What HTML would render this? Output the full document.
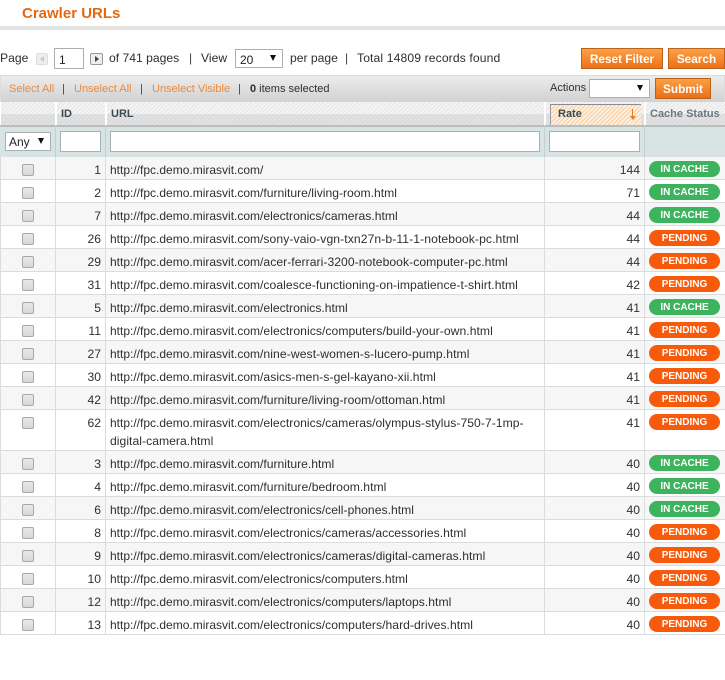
<!DOCTYPE html>
<html><head><meta charset="utf-8">
<style>
html,body{margin:0;padding:0;background:#fff;width:725px;height:680px;overflow:hidden}
body{font-family:"Liberation Sans",sans-serif;font-size:12.15px;color:#2f2f2f;position:relative}
.a{position:absolute;white-space:nowrap}
.btn{position:absolute;height:19px;line-height:20px;text-align:center;color:#fff;font-weight:bold;font-size:11.8px;background:linear-gradient(#fb9c3c,#f0690a);border:1px solid #b85a10;opacity:.95}
.inp{position:absolute;background:#fff;border:1px solid #aab0b0;box-sizing:border-box}
.tri{position:absolute;width:0;height:0;border-left:3px solid transparent;border-right:3px solid transparent;border-top:6px solid #111}
.t{font-size:11px}
.o{color:#ea8a3c}
.sep{color:#444}
.hd{position:absolute;top:102px;height:23px;background:repeating-linear-gradient(135deg,#e6e6e6 0 1px,#f4f4f4 1px 3px);overflow:hidden}
.hd:after{content:"";position:absolute;left:0;right:0;top:12px;bottom:0;background:rgba(180,180,180,.28)}
.ht{position:absolute;top:102px;line-height:25px;font-size:11px;font-weight:bold;color:#3a4b55;z-index:2}
.f{position:absolute;top:127px;height:30px;background:#d8e4e3}
.r{position:absolute;left:0;width:725px;height:22px;border-bottom:1px solid #d9dddd}
.r.odd{background:#f6f6f6}
.r>i{position:absolute;top:0;bottom:-1px;width:1px;background:#d9dddd}
.cb{position:absolute;left:22px;top:7px;width:10px;height:10px;background:linear-gradient(#e8e8e8,#d8d8d8);border:1px solid #a8a8a8;border-radius:2px}
.id{position:absolute;left:56px;width:45px;top:7px;text-align:right;line-height:13px}
.u{position:absolute;left:110px;top:7px;line-height:13px;white-space:nowrap}
.u b{font-weight:normal;font-size:12px;letter-spacing:0}
.n{position:absolute;left:546px;width:94px;top:7px;text-align:right;line-height:13px}
.p{position:absolute;left:649px;top:4px;width:71px;height:16px;line-height:18px;border-radius:8px;text-align:center;color:#fff;font-weight:bold;font-size:10px}
.g{background:#3cb35c}
.y{background:#f65a0a}
</style></head><body>

<div class="a" style="left:22px;top:5px;font-size:15px;font-weight:bold;color:#e5690e;line-height:18px">Crawler URLs</div>
<div class="a" style="left:0;top:26px;width:725px;height:4px;background:#e3e3e3"></div>

<div class="a" style="left:0;top:51px;line-height:14px">Page</div>
<div class="inp" style="left:36px;top:53px;width:12px;height:12px;background:#eee;border-color:#ddd;border-radius:2px"></div>
<div class="a" style="left:40px;top:56px;width:0;height:0;border-right:4px solid #c8c8c8;border-top:3px solid transparent;border-bottom:3px solid transparent"></div>
<div class="inp" style="left:54px;top:48px;width:30px;height:21px;padding:4px 0 0 4px;font-size:12px;line-height:14px;color:#222">1</div>
<div class="inp" style="left:90px;top:53px;width:13px;height:12px;background:#eee;border-color:#999;border-radius:2px"></div>
<div class="a" style="left:95px;top:56px;width:0;height:0;border-left:4px solid #444;border-top:3px solid transparent;border-bottom:3px solid transparent"></div>
<div class="a" style="left:109px;top:51px;line-height:14px">of 741 pages</div>
<div class="a sep" style="left:189px;top:51px;line-height:14px">|</div>
<div class="a" style="left:201px;top:51px;line-height:14px">View</div>
<div class="inp" style="left:235px;top:49px;width:48px;height:19px;padding:3px 0 0 4px;font-size:12px;line-height:14px;color:#222">20</div>
<div class="tri" style="left:270px;top:55px"></div>
<div class="a" style="left:290px;top:51px;line-height:14px">per page</div>
<div class="a sep" style="left:345px;top:51px;line-height:14px">|</div>
<div class="a" style="left:357px;top:51px;line-height:14px;letter-spacing:.12px">Total 14809 records found</div>
<div class="btn" style="left:581px;top:48px;width:80px">Reset Filter</div>
<div class="btn" style="left:668px;top:48px;width:55px">Search</div>

<div class="a" style="left:0;top:75px;width:725px;height:27px;box-sizing:border-box;background:linear-gradient(#ececec,#d2d2d2);border:1px solid #dcdcdc;border-bottom:0"></div>
<div class="a o t" style="left:9px;top:82px;line-height:14px">Select All</div>
<div class="a sep t" style="left:62px;top:82px;line-height:14px">|</div>
<div class="a o t" style="left:74px;top:82px;line-height:14px">Unselect All</div>
<div class="a sep t" style="left:140px;top:82px;line-height:14px">|</div>
<div class="a o t" style="left:152px;top:82px;line-height:14px">Unselect Visible</div>
<div class="a sep t" style="left:238px;top:82px;line-height:14px">|</div>
<div class="a t" style="left:250px;top:82px;line-height:14px"><strong>0</strong> items selected</div>
<div class="a t" style="left:550px;top:81px;line-height:14px">Actions</div>
<div class="inp" style="left:589px;top:79px;width:61px;height:19px"></div>
<div class="tri" style="left:637px;top:85px"></div>
<div class="btn" style="left:655px;top:78px;width:54px">Submit</div>

<div class="a" style="left:0;top:102px;width:725px;height:23px;background:#fff"></div>
<div class="hd" style="left:1px;width:54px"></div>
<div class="hd" style="left:57px;width:48px"></div>
<div class="hd" style="left:107px;width:437px"></div>
<div class="hd" style="left:546px;width:98px"></div>
<div class="hd" style="left:646px;width:79px"></div>
<div class="a" style="left:550px;top:104px;width:90px;height:20px;background:repeating-linear-gradient(135deg,#f8cfa0 0 1px,#fdf0e0 1px 3px);border-left:1px solid #99a;border-top:1px solid #889;z-index:2"></div>
<div class="ht" style="left:61px">ID</div>
<div class="ht" style="left:111px">URL</div>
<div class="ht" style="left:558px">Rate</div>
<div class="a" style="left:632px;top:109px;width:1px;height:10px;background:#ee7a1a;z-index:3"></div>
<div class="a" style="left:629.5px;top:116px;width:0;height:0;border-left:3px solid transparent;border-right:3px solid transparent;border-top:4px solid #ee7a1a;z-index:3"></div>
<div class="ht" style="left:650px;color:#6a7880">Cache Status</div>

<div class="a" style="left:0;top:125px;width:725px;height:2px;background:#b5bfbf"></div>
<div class="f" style="left:0;width:725px"></div>
<div class="a" style="left:55px;top:125px;width:1px;height:32px;background:#c3d0cf"></div>
<div class="a" style="left:105px;top:125px;width:1px;height:32px;background:#c3d0cf"></div>
<div class="a" style="left:544px;top:125px;width:1px;height:32px;background:#c3d0cf"></div>
<div class="a" style="left:644px;top:125px;width:1px;height:32px;background:#c3d0cf"></div>
<div class="inp" style="left:5px;top:132px;width:46px;height:19px;padding:2px 0 0 3px;font-size:12px;line-height:14px;color:#222">Any</div>
<div class="tri" style="left:38px;top:138px"></div>
<div class="inp" style="left:60px;top:131px;width:41px;height:21px"></div>
<div class="inp" style="left:110px;top:131px;width:430px;height:21px"></div>
<div class="inp" style="left:549px;top:131px;width:91px;height:21px"></div>

<div class="r odd" style="top:157px"><i style="left:0"></i><i style="left:55px"></i><i style="left:105px"></i><i style="left:544px"></i><i style="left:644px"></i><span class="cb"></span><span class="id">1</span><span class="u"><b>http://fpc.demo.mirasvit.com/</b></span><span class="n">144</span><span class="p g">IN CACHE</span></div>
<div class="r" style="top:180px"><i style="left:0"></i><i style="left:55px"></i><i style="left:105px"></i><i style="left:544px"></i><i style="left:644px"></i><span class="cb"></span><span class="id">2</span><span class="u"><b>http://fpc.demo.mirasvit.com/</b>furniture/living-room.html</span><span class="n">71</span><span class="p g">IN CACHE</span></div>
<div class="r odd" style="top:203px"><i style="left:0"></i><i style="left:55px"></i><i style="left:105px"></i><i style="left:544px"></i><i style="left:644px"></i><span class="cb"></span><span class="id">7</span><span class="u"><b>http://fpc.demo.mirasvit.com/</b>electronics/cameras.html</span><span class="n">44</span><span class="p g">IN CACHE</span></div>
<div class="r" style="top:226px"><i style="left:0"></i><i style="left:55px"></i><i style="left:105px"></i><i style="left:544px"></i><i style="left:644px"></i><span class="cb"></span><span class="id">26</span><span class="u" style="letter-spacing:.09px"><b>http://fpc.demo.mirasvit.com/</b>sony-vaio-vgn-txn27n-b-11-1-notebook-pc.html</span><span class="n">44</span><span class="p y">PENDING</span></div>
<div class="r odd" style="top:249px"><i style="left:0"></i><i style="left:55px"></i><i style="left:105px"></i><i style="left:544px"></i><i style="left:644px"></i><span class="cb"></span><span class="id">29</span><span class="u" style="letter-spacing:.05px"><b>http://fpc.demo.mirasvit.com/</b>acer-ferrari-3200-notebook-computer-pc.html</span><span class="n">44</span><span class="p y">PENDING</span></div>
<div class="r" style="top:272px"><i style="left:0"></i><i style="left:55px"></i><i style="left:105px"></i><i style="left:544px"></i><i style="left:644px"></i><span class="cb"></span><span class="id">31</span><span class="u" style="letter-spacing:.06px"><b>http://fpc.demo.mirasvit.com/</b>coalesce-functioning-on-impatience-t-shirt.html</span><span class="n">42</span><span class="p y">PENDING</span></div>
<div class="r odd" style="top:295px"><i style="left:0"></i><i style="left:55px"></i><i style="left:105px"></i><i style="left:544px"></i><i style="left:644px"></i><span class="cb"></span><span class="id">5</span><span class="u"><b>http://fpc.demo.mirasvit.com/</b>electronics.html</span><span class="n">41</span><span class="p g">IN CACHE</span></div>
<div class="r" style="top:318px"><i style="left:0"></i><i style="left:55px"></i><i style="left:105px"></i><i style="left:544px"></i><i style="left:644px"></i><span class="cb"></span><span class="id">11</span><span class="u" style="letter-spacing:.05px"><b>http://fpc.demo.mirasvit.com/</b>electronics/computers/build-your-own.html</span><span class="n">41</span><span class="p y">PENDING</span></div>
<div class="r odd" style="top:341px"><i style="left:0"></i><i style="left:55px"></i><i style="left:105px"></i><i style="left:544px"></i><i style="left:644px"></i><span class="cb"></span><span class="id">27</span><span class="u" style="letter-spacing:.09px"><b>http://fpc.demo.mirasvit.com/</b>nine-west-women-s-lucero-pump.html</span><span class="n">41</span><span class="p y">PENDING</span></div>
<div class="r" style="top:364px"><i style="left:0"></i><i style="left:55px"></i><i style="left:105px"></i><i style="left:544px"></i><i style="left:644px"></i><span class="cb"></span><span class="id">30</span><span class="u" style="letter-spacing:.06px"><b>http://fpc.demo.mirasvit.com/</b>asics-men-s-gel-kayano-xii.html</span><span class="n">41</span><span class="p y">PENDING</span></div>
<div class="r odd" style="top:387px"><i style="left:0"></i><i style="left:55px"></i><i style="left:105px"></i><i style="left:544px"></i><i style="left:644px"></i><span class="cb"></span><span class="id">42</span><span class="u" style="letter-spacing:.03px"><b>http://fpc.demo.mirasvit.com/</b>furniture/living-room/ottoman.html</span><span class="n">41</span><span class="p y">PENDING</span></div>
<div class="r" style="top:410px;height:40px"><i style="left:0"></i><i style="left:55px"></i><i style="left:105px"></i><i style="left:544px"></i><i style="left:644px"></i><span class="cb"></span><span class="id">62</span><span class="u" style="line-height:18px;top:4px;letter-spacing:.04px"><b>http://fpc.demo.mirasvit.com/</b>electronics/cameras/olympus-stylus-750-7-1mp-<br>digital-camera.html</span><span class="n">41</span><span class="p y">PENDING</span></div>
<div class="r odd" style="top:451px"><i style="left:0"></i><i style="left:55px"></i><i style="left:105px"></i><i style="left:544px"></i><i style="left:644px"></i><span class="cb"></span><span class="id">3</span><span class="u"><b>http://fpc.demo.mirasvit.com/</b>furniture.html</span><span class="n">40</span><span class="p g">IN CACHE</span></div>
<div class="r" style="top:474px"><i style="left:0"></i><i style="left:55px"></i><i style="left:105px"></i><i style="left:544px"></i><i style="left:644px"></i><span class="cb"></span><span class="id">4</span><span class="u" style="letter-spacing:.04px"><b>http://fpc.demo.mirasvit.com/</b>furniture/bedroom.html</span><span class="n">40</span><span class="p g">IN CACHE</span></div>
<div class="r odd" style="top:497px"><i style="left:0"></i><i style="left:55px"></i><i style="left:105px"></i><i style="left:544px"></i><i style="left:644px"></i><span class="cb"></span><span class="id">6</span><span class="u" style="letter-spacing:.03px"><b>http://fpc.demo.mirasvit.com/</b>electronics/cell-phones.html</span><span class="n">40</span><span class="p g">IN CACHE</span></div>
<div class="r" style="top:520px"><i style="left:0"></i><i style="left:55px"></i><i style="left:105px"></i><i style="left:544px"></i><i style="left:644px"></i><span class="cb"></span><span class="id">8</span><span class="u" style="letter-spacing:.03px"><b>http://fpc.demo.mirasvit.com/</b>electronics/cameras/accessories.html</span><span class="n">40</span><span class="p y">PENDING</span></div>
<div class="r odd" style="top:543px"><i style="left:0"></i><i style="left:55px"></i><i style="left:105px"></i><i style="left:544px"></i><i style="left:644px"></i><span class="cb"></span><span class="id">9</span><span class="u" style="letter-spacing:.05px"><b>http://fpc.demo.mirasvit.com/</b>electronics/cameras/digital-cameras.html</span><span class="n">40</span><span class="p y">PENDING</span></div>
<div class="r" style="top:566px"><i style="left:0"></i><i style="left:55px"></i><i style="left:105px"></i><i style="left:544px"></i><i style="left:644px"></i><span class="cb"></span><span class="id">10</span><span class="u"><b>http://fpc.demo.mirasvit.com/</b>electronics/computers.html</span><span class="n">40</span><span class="p y">PENDING</span></div>
<div class="r odd" style="top:589px"><i style="left:0"></i><i style="left:55px"></i><i style="left:105px"></i><i style="left:544px"></i><i style="left:644px"></i><span class="cb"></span><span class="id">12</span><span class="u" style="letter-spacing:.03px"><b>http://fpc.demo.mirasvit.com/</b>electronics/computers/laptops.html</span><span class="n">40</span><span class="p y">PENDING</span></div>
<div class="r" style="top:612px"><i style="left:0"></i><i style="left:55px"></i><i style="left:105px"></i><i style="left:544px"></i><i style="left:644px"></i><span class="cb"></span><span class="id">13</span><span class="u" style="letter-spacing:.03px"><b>http://fpc.demo.mirasvit.com/</b>electronics/computers/hard-drives.html</span><span class="n">40</span><span class="p y">PENDING</span></div>

</body></html>
